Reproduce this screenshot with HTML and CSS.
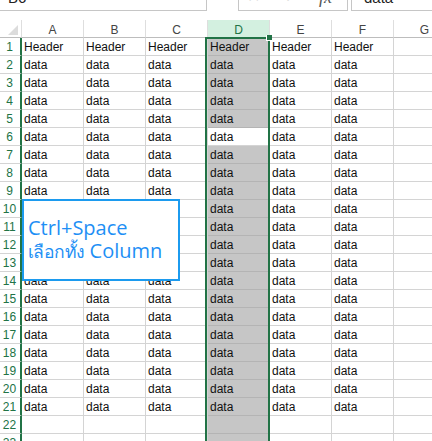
FILE: index.html
```html
<!DOCTYPE html>
<html>
<head>
<meta charset="utf-8">
<link rel="stylesheet" href="styles.css">
</head>
<body>
<div class="page">
  <div class="fbar">
    <div class="namebox"><span class="nbtext">B6</span></div>
    <div class="gap"></div>
    <div class="iconbox"><span class="ic x">✕</span><span class="ic ok">✓</span><span class="ic fx">fx</span></div>
    <div class="gap2"></div>
    <div class="formula"><span class="ftext">data</span></div>
  </div>
  <div class="sheet">
    <div class="row hdr"><div class="corner"><svg width="10" height="10" viewBox="0 0 10 10"><polygon points="10,0 10,10 0,10" fill="#dcdcdc"/></svg></div><div class="ch">A</div><div class="ch">B</div><div class="ch">C</div><div class="ch chsel">D</div><div class="ch">E</div><div class="ch">F</div><div class="ch">G</div></div>
    <div class="row"><div class="rh">1</div><div class="c">Header</div><div class="c">Header</div><div class="c">Header</div><div class="c sel">Header</div><div class="c">Header</div><div class="c">Header</div><div class="c"></div></div>
    <div class="row"><div class="rh">2</div><div class="c">data</div><div class="c">data</div><div class="c">data</div><div class="c sel">data</div><div class="c">data</div><div class="c">data</div><div class="c"></div></div>
    <div class="row"><div class="rh">3</div><div class="c">data</div><div class="c">data</div><div class="c">data</div><div class="c sel">data</div><div class="c">data</div><div class="c">data</div><div class="c"></div></div>
    <div class="row"><div class="rh">4</div><div class="c">data</div><div class="c">data</div><div class="c">data</div><div class="c sel">data</div><div class="c">data</div><div class="c">data</div><div class="c"></div></div>
    <div class="row"><div class="rh">5</div><div class="c">data</div><div class="c">data</div><div class="c">data</div><div class="c sel">data</div><div class="c">data</div><div class="c">data</div><div class="c"></div></div>
    <div class="row"><div class="rh">6</div><div class="c">data</div><div class="c">data</div><div class="c">data</div><div class="c act">data</div><div class="c">data</div><div class="c">data</div><div class="c"></div></div>
    <div class="row"><div class="rh">7</div><div class="c">data</div><div class="c">data</div><div class="c">data</div><div class="c sel">data</div><div class="c">data</div><div class="c">data</div><div class="c"></div></div>
    <div class="row"><div class="rh">8</div><div class="c">data</div><div class="c">data</div><div class="c">data</div><div class="c sel">data</div><div class="c">data</div><div class="c">data</div><div class="c"></div></div>
    <div class="row"><div class="rh">9</div><div class="c">data</div><div class="c">data</div><div class="c">data</div><div class="c sel">data</div><div class="c">data</div><div class="c">data</div><div class="c"></div></div>
    <div class="row"><div class="rh">10</div><div class="c">data</div><div class="c">data</div><div class="c">data</div><div class="c sel">data</div><div class="c">data</div><div class="c">data</div><div class="c"></div></div>
    <div class="row"><div class="rh">11</div><div class="c">data</div><div class="c">data</div><div class="c">data</div><div class="c sel">data</div><div class="c">data</div><div class="c">data</div><div class="c"></div></div>
    <div class="row"><div class="rh">12</div><div class="c">data</div><div class="c">data</div><div class="c">data</div><div class="c sel">data</div><div class="c">data</div><div class="c">data</div><div class="c"></div></div>
    <div class="row"><div class="rh">13</div><div class="c">data</div><div class="c">data</div><div class="c">data</div><div class="c sel">data</div><div class="c">data</div><div class="c">data</div><div class="c"></div></div>
    <div class="row"><div class="rh">14</div><div class="c">data</div><div class="c">data</div><div class="c">data</div><div class="c sel">data</div><div class="c">data</div><div class="c">data</div><div class="c"></div></div>
    <div class="row"><div class="rh">15</div><div class="c">data</div><div class="c">data</div><div class="c">data</div><div class="c sel">data</div><div class="c">data</div><div class="c">data</div><div class="c"></div></div>
    <div class="row"><div class="rh">16</div><div class="c">data</div><div class="c">data</div><div class="c">data</div><div class="c sel">data</div><div class="c">data</div><div class="c">data</div><div class="c"></div></div>
    <div class="row"><div class="rh">17</div><div class="c">data</div><div class="c">data</div><div class="c">data</div><div class="c sel">data</div><div class="c">data</div><div class="c">data</div><div class="c"></div></div>
    <div class="row"><div class="rh">18</div><div class="c">data</div><div class="c">data</div><div class="c">data</div><div class="c sel">data</div><div class="c">data</div><div class="c">data</div><div class="c"></div></div>
    <div class="row"><div class="rh">19</div><div class="c">data</div><div class="c">data</div><div class="c">data</div><div class="c sel">data</div><div class="c">data</div><div class="c">data</div><div class="c"></div></div>
    <div class="row"><div class="rh">20</div><div class="c">data</div><div class="c">data</div><div class="c">data</div><div class="c sel">data</div><div class="c">data</div><div class="c">data</div><div class="c"></div></div>
    <div class="row"><div class="rh">21</div><div class="c">data</div><div class="c">data</div><div class="c">data</div><div class="c sel">data</div><div class="c">data</div><div class="c">data</div><div class="c"></div></div>
    <div class="row"><div class="rh">22</div><div class="c"></div><div class="c"></div><div class="c"></div><div class="c sel"></div><div class="c"></div><div class="c"></div><div class="c"></div></div>
    <div class="row"><div class="rh">23</div><div class="c"></div><div class="c"></div><div class="c"></div><div class="c sel"></div><div class="c"></div><div class="c"></div><div class="c"></div></div>
  </div>
  <div class="selbox"></div>
  <div class="handle"></div>
  <div class="tip">
    <div class="tipline">Ctrl+Space</div>
    <div class="tipline"><span class="thai">เลือกทั้ง</span> Column</div>
  </div>
</div>
</body>
</html>
```
FILE: styles.css
```css
html, body {
  margin: 0;
  padding: 0;
  background: #ffffff;
}
.page {
  position: relative;
  width: 432px;
  height: 441px;
  overflow: hidden;
  font-family: "Liberation Sans", Arial, sans-serif;
  color: #111111;
}
.fbar {
  display: flex;
  height: 11px;
  overflow: hidden;
  margin-bottom: 9px;
}
.namebox {
  box-sizing: border-box;
  width: 207px;
  height: 11px;
  border-right: 1px solid #c6c6c6;
  border-bottom: 1px solid #c6c6c6;
  padding-left: 8px;
  overflow: hidden;
}
.nbtext {
  display: block;
  font-size: 15px;
  line-height: 16px;
  margin-top: -10px;
  color: #222;
}
.gap { width: 31px; }
.iconbox {
  box-sizing: border-box;
  width: 110px;
  height: 11px;
  border-left: 1px solid #c6c6c6;
  border-right: 1px solid #c6c6c6;
  border-bottom: 1px solid #c6c6c6;
  display: flex;
  overflow: hidden;
}
.ic {
  display: block;
  font-size: 16px;
  line-height: 16px;
  margin-top: -11px;
  color: #c8c8c8;
}
.ic.x { margin-left: 8px; }
.ic.ok { margin-left: 24px; }
.ic.fx { margin-left: 22px; color: #555; font-style: italic; font-family: "Liberation Serif", serif; font-size: 18px; }
.gap2 { width: 3px; }
.formula {
  box-sizing: border-box;
  flex: 1;
  height: 11px;
  border-left: 1px solid #c6c6c6;
  border-bottom: 1px solid #c6c6c6;
  padding-left: 12px;
  overflow: hidden;
}
.ftext {
  display: block;
  font-size: 15px;
  line-height: 16px;
  margin-top: -10px;
  color: #222;
}
.sheet {
  display: flex;
  flex-direction: column;
}
.row {
  display: grid;
  grid-template-columns: 22px repeat(7, 62px);
  height: 18px;
}
.row > div {
  box-sizing: border-box;
  height: 18px;
  border-bottom: 1px solid #d4d4d4;
  border-right: 1px solid #d4d4d4;
  overflow: hidden;
  white-space: nowrap;
}
.row.hdr > div {
  border-bottom: 1px solid #bdbdbd;
  border-right: 1px solid #dedede;
}
.corner {
  display: flex;
  align-items: flex-end;
  justify-content: flex-end;
  padding: 0 3px 2px 0;
}
.corner svg { display: block; }
.ch {
  text-align: center;
  font-size: 12px;
  line-height: 14px;
  padding-top: 3px;
  color: #444444;
}
.row.hdr > .chsel {
  background: #d3f0e0;
  color: #217346;
}
.rh {
  text-align: center;
  font-size: 12px;
  line-height: 15px;
  padding-top: 2px;
  color: #217346;
}
.row > .rh {
  border-right: 2px solid #217346;
  padding-right: 1px;
}
.c {
  font-size: 12px;
  line-height: 15px;
  padding-top: 2px;
  padding-left: 2px;
}
.row > .sel {
  background: #c6c6c6;
  border-bottom-color: #b4b4b4;
}
.act {
  background: #ffffff;
}
.selbox {
  position: absolute;
  left: 205px;
  top: 37px;
  width: 61px;
  height: 420px;
  border: 2px solid #217346;
}
.handle {
  position: absolute;
  left: 266px;
  top: 35px;
  width: 5px;
  height: 5px;
  background: #217346;
  border: 1px solid #ffffff;
  border-top: none;
  border-right: none;
}
.tip {
  position: absolute;
  left: 22px;
  top: 199px;
  box-sizing: border-box;
  width: 158px;
  height: 82px;
  border: 2px solid #1c9bef;
  background: #ffffff;
  padding: 15px 0 0 4px;
  color: #1e8ff5;
}
.tipline {
  font-family: "Open Sans", "Liberation Sans", sans-serif;
  font-size: 20px;
  line-height: 23px;
  white-space: nowrap;
}
.thai {
  font-size: 17.5px;
  letter-spacing: -0.6px;
}
```
